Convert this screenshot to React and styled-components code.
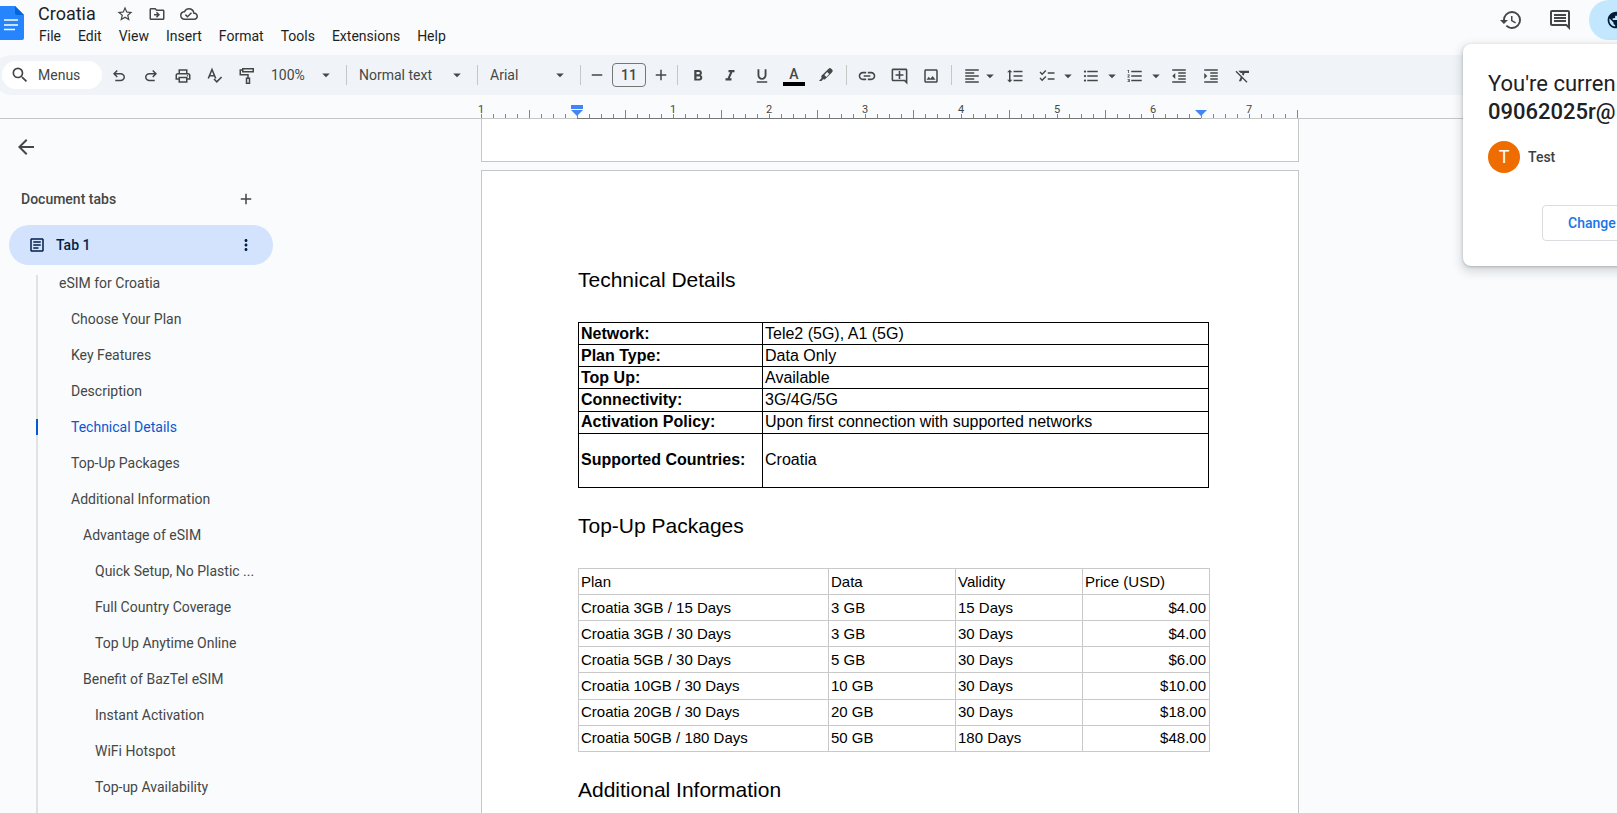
import { useState } from "react"
import styled, { createGlobalStyle } from "styled-components"
import {
    MdAdd, MdArrowBack, MdArrowDropDown, MdChecklist, MdFormatAlignLeft, MdFormatBold, MdFormatClear,
    MdFormatIndentDecrease, MdFormatIndentIncrease, MdFormatItalic, MdFormatLineSpacing, MdFormatListBulleted,
    MdFormatListNumbered, MdFormatUnderlined, MdHistory, MdInsertLink, MdMoreVert, MdOutlineAddComment,
    MdOutlineArticle, MdOutlineCloudDone, MdOutlineDriveFileMove, MdOutlineImage, MdOutlineInsertComment,
    MdOutlineLocalPrintshop, MdPublic, MdRemove, MdSearch, MdStarBorder
} from "react-icons/md"

const menus = ["File", "Edit", "View", "Insert", "Format", "Tools", "Extensions", "Help"]

const outline = [
    { text: "eSIM for Croatia", level: 0 },
    { text: "Choose Your Plan", level: 1 },
    { text: "Key Features", level: 1 },
    { text: "Description", level: 1 },
    { text: "Technical Details", level: 1 },
    { text: "Top-Up Packages", level: 1 },
    { text: "Additional Information", level: 1 },
    { text: "Advantage of eSIM", level: 2 },
    { text: "Quick Setup, No Plastic ...", level: 3 },
    { text: "Full Country Coverage", level: 3 },
    { text: "Top Up Anytime Online", level: 3 },
    { text: "Benefit of BazTel eSIM", level: 2 },
    { text: "Instant Activation", level: 3 },
    { text: "WiFi Hotspot", level: 3 },
    { text: "Top-up Availability", level: 3 }
]

const details = [
    ["Network:", "Tele2 (5G), A1 (5G)"],
    ["Plan Type:", "Data Only"],
    ["Top Up:", "Available"],
    ["Connectivity:", "3G/4G/5G"],
    ["Activation Policy:", "Upon first connection with supported networks"],
    ["Supported Countries:", "Croatia"]
]

const packages = [
    ["Croatia 3GB / 15 Days", "3 GB", "15 Days", "$4.00"],
    ["Croatia 3GB / 30 Days", "3 GB", "30 Days", "$4.00"],
    ["Croatia 5GB / 30 Days", "5 GB", "30 Days", "$6.00"],
    ["Croatia 10GB / 30 Days", "10 GB", "30 Days", "$10.00"],
    ["Croatia 20GB / 30 Days", "20 GB", "30 Days", "$18.00"],
    ["Croatia 50GB / 180 Days", "50 GB", "180 Days", "$48.00"]
]

// 12px per eighth of an inch, the text area runs from tick 8 to tick 60
const ticks = Array.from({ length: 69 }, (_, i) => i)

function tickLabel(i) {
    return i % 8 === 0 && i !== 8 ? Math.abs(i / 8 - 1) : null
}

function DocsLogo() {
    return (
        <svg width="24" height="34" viewBox="0 0 24 34">
            <path d="M0 0H15L24 9V32a2 2 0 0 1-2 2H0z" fill="#2684fc" />
            <path d="M15 0L24 9H17a2 2 0 0 1-2-2z" fill="#0066da" />
            <path d="M4 14h14M4 19h14M4 23.500h11" stroke="#fff" strokeWidth="1.600" />
        </svg>
    )
}

function UndoIcon() {
    return (
        <svg width="18" height="18" viewBox="0 -960 960 960" fill="currentColor">
            <path d="M280-200v-80h284q63 0 109.500-40T720-420q0-60-46.500-100T564-560H312l104 104-56 56-200-200 200-200 56 56-104 104h252q97 0 166.500 63T800-420q0 94-69.500 157T564-200H280Z" />
        </svg>
    )
}

function RedoIcon() {
    return (
        <svg width="18" height="18" viewBox="0 -960 960 960" fill="currentColor">
            <path d="M396-200q-97 0-166.500-63T160-420q0-94 69.500-157T396-640h252L544-744l56-56 200 200-200 200-56-56 104-104H396q-63 0-109.500 40T240-420q0 60 46.500 100T396-280h284v80H396Z" />
        </svg>
    )
}

function SpellIcon() {
    return (
        <svg width="18" height="18" viewBox="0 0 18 18" fill="none" stroke="currentColor" strokeWidth="1.600">
            <path d="M2.300 11.500L6 2.500L9.700 11.500M3.600 8.800h4.800" />
            <path d="M8 12l2.800 2.800 4.800-4.800" />
        </svg>
    )
}

function PaintIcon() {
    return (
        <svg width="18" height="18" viewBox="0 0 18 18" fill="none" stroke="currentColor" strokeWidth="1.500">
            <path d="M4.750 1.750h10.500v3H4.750zM4.500 3H2.250v4.750H10V11M8.500 11.250h3v5h-3z" />
        </svg>
    )
}

function HighlightIcon() {
    return (
        <svg width="18" height="18" viewBox="0 0 18 18" fill="currentColor">
            <path d="M2 14l2.600-3-.4-2L11.600 1.700c.8-.8 1.800-.8 2.600 0l.9.900c.8.800.8 1.800 0 2.600L7.800 12.500l-1.800-.300L4.500 14z" />
            <path d="M7.400 7.900l2 2L12.200 7l-2-2z" fill="#f0f4f9" />
        </svg>
    )
}

function DropDown({ label, value, width }) {
    return (
        <SelectBox $width={width}>
            <select aria-label={label} defaultValue={value}>
                <option>{value}</option>
            </select>
            <MdArrowDropDown size={18} />
        </SelectBox>
    )
}

function SplitTool({ label, narrow, children }) {
    return (
        <SplitButton aria-label={label} $narrow={narrow}>
            {children}
            <MdArrowDropDown size={18} />
        </SplitButton>
    )
}

export default function App() {
    const [active, setActive] = useState("Technical Details")
    const [title, setTitle] = useState("Croatia")
    const [size, setSize] = useState(11)

    return (
        <PageContainer>
            <GlobalStyle />

            <Header>
                <LogoLink href="#" aria-label="Docs home"><DocsLogo /></LogoLink>
                <TitleBlock>
                    <TitleRow>
                        <TitleInput aria-label="Rename" value={title} onChange={(e) => setTitle(e.target.value)} />
                        <TitleButton aria-label="Star"><MdStarBorder size={18} /></TitleButton>
                        <TitleButton aria-label="Move"><MdOutlineDriveFileMove size={18} /></TitleButton>
                        <TitleButton aria-label="Document status"><MdOutlineCloudDone size={18} /></TitleButton>
                    </TitleRow>
                    <MenuBar>
                        {menus.map((el) => <MenuItem key={el}>{el}</MenuItem>)}
                    </MenuBar>
                </TitleBlock>
                <HeaderActions>
                    <HeaderButton aria-label="Version history"><MdHistory size={24} /></HeaderButton>
                    <HeaderButton aria-label="Comments"><MdOutlineInsertComment size={24} /></HeaderButton>
                    <ShareButton aria-label="Share"><MdPublic size={20} /></ShareButton>
                </HeaderActions>
            </Header>

            <Toolbar>
                <SearchBox>
                    <MdSearch size={20} />
                    <input aria-label="Menus" placeholder="Menus" />
                </SearchBox>
                <ToolButton aria-label="Undo"><UndoIcon /></ToolButton>
                <ToolButton aria-label="Redo"><RedoIcon /></ToolButton>
                <ToolButton aria-label="Print"><MdOutlineLocalPrintshop size={18} /></ToolButton>
                <ToolButton aria-label="Spelling check"><SpellIcon /></ToolButton>
                <ToolButton aria-label="Paint format"><PaintIcon /></ToolButton>
                <DropDown label="Zoom" value="100%" width={79} />
                <Separator />
                <DropDown label="Styles" value="Normal text" width={122} />
                <Separator />
                <DropDown label="Font" value="Arial" width={94} />
                <Separator />
                <SizeGroup>
                    <SizeButton aria-label="Decrease font size" onClick={() => setSize(size - 1)}><MdRemove size={18} /></SizeButton>
                    <SizeInput aria-label="Font size" value={size} onChange={(e) => setSize(Number(e.target.value))} />
                    <SizeButton aria-label="Increase font size" onClick={() => setSize(size + 1)}><MdAdd size={18} /></SizeButton>
                </SizeGroup>
                <Separator />
                <ToolButton aria-label="Bold"><MdFormatBold size={18} /></ToolButton>
                <ToolButton aria-label="Italic"><MdFormatItalic size={18} /></ToolButton>
                <ToolButton aria-label="Underline"><MdFormatUnderlined size={18} /></ToolButton>
                <ToolButton aria-label="Text color"><ColorLetter>A</ColorLetter></ToolButton>
                <ToolButton aria-label="Highlight color"><HighlightIcon /></ToolButton>
                <Separator />
                <ToolButton aria-label="Insert link"><MdInsertLink size={20} /></ToolButton>
                <ToolButton aria-label="Add comment"><MdOutlineAddComment size={19} /></ToolButton>
                <ToolButton aria-label="Insert image"><MdOutlineImage size={18} /></ToolButton>
                <Separator />
                <SplitTool label="Align" narrow><MdFormatAlignLeft size={18} /></SplitTool>
                <ToolButton aria-label="Line spacing"><MdFormatLineSpacing size={18} /></ToolButton>
                <SplitTool label="Checklist"><MdChecklist size={18} /></SplitTool>
                <SplitTool label="Bulleted list"><MdFormatListBulleted size={18} /></SplitTool>
                <SplitTool label="Numbered list"><MdFormatListNumbered size={18} /></SplitTool>
                <ToolButton aria-label="Decrease indent"><MdFormatIndentDecrease size={18} /></ToolButton>
                <ToolButton aria-label="Increase indent"><MdFormatIndentIncrease size={18} /></ToolButton>
                <ToolButton aria-label="Clear formatting"><MdFormatClear size={18} /></ToolButton>
            </Toolbar>

            <Ruler>
                {ticks.map((i) =>
                <Tick key={i} $half={i % 8 === 4} $inside={i >= 8 && i < 60}>
                    {tickLabel(i) !== null && <TickLabel>{tickLabel(i)}</TickLabel>}
                    {i === 8 && <IndentMarker $first />}
                    {i === 60 && <IndentMarker />}
                </Tick>)}
            </Ruler>

            <Workspace>
                <Sidebar>
                    <BackButton aria-label="Close tabs"><MdArrowBack size={24} /></BackButton>
                    <SidebarTitle>
                        Document tabs
                        <SidebarButton aria-label="Add tab"><MdAdd size={18} /></SidebarButton>
                    </SidebarTitle>
                    <TabItem>
                        <MdOutlineArticle size={18} />
                        <span>Tab 1</span>
                        <SidebarButton aria-label="Tab options"><MdMoreVert size={18} /></SidebarButton>
                    </TabItem>
                    <OutlineList>
                        {outline.map((el) =>
                        <OutlineItem key={el.text} $level={el.level} $active={el.text === active}>
                            <a href="#" onClick={() => setActive(el.text)}>{el.text}</a>
                        </OutlineItem>)}
                    </OutlineList>
                </Sidebar>

                <Canvas>
                    <PreviousSheet />
                    <Sheet>
                        <Heading>Technical Details</Heading>
                        <DetailsTable>
                            <tbody>
                                {details.map((row) =>
                                <tr key={row[0]}>
                                    <th scope="row">{row[0]}</th>
                                    <td>{row[1]}</td>
                                </tr>)}
                            </tbody>
                        </DetailsTable>
                        <Heading>Top-Up Packages</Heading>
                        <PackagesTable>
                            <thead>
                                <tr>
                                    <th>Plan</th>
                                    <th>Data</th>
                                    <th>Validity</th>
                                    <th>Price (USD)</th>
                                </tr>
                            </thead>
                            <tbody>
                                {packages.map((row) =>
                                <tr key={row[0]}>
                                    {row.map((cell, i) => <td key={i}>{cell}</td>)}
                                </tr>)}
                            </tbody>
                        </PackagesTable>
                        <Heading>Additional Information</Heading>
                    </Sheet>
                </Canvas>
            </Workspace>

            <AccountPopup>
                <p>You're curren</p>
                <strong>09062025r@</strong>
                <AccountRow>
                    <Avatar>T</Avatar>
                    Test
                </AccountRow>
                <ChangeButton>Change</ChangeButton>
            </AccountPopup>
        </PageContainer>
    )
}

const GlobalStyle = createGlobalStyle`
    * {
        box-sizing: border-box;
    }
    body {
        margin: 0;
        overflow: hidden;
        background-color: #f9fbfd;
    }
    button, input, select {
        font-family: inherit;
        font-size: inherit;
        color: inherit;
        border: none;
        background: none;
        padding: 0;
        margin: 0;
    }
    button {
        cursor: pointer;
    }
    svg {
        flex-shrink: 0;
        display: block;
    }
`
const PageContainer = styled.div`
    position: relative;
    display: flex;
    flex-direction: column;
    height: 100vh;
    overflow: hidden;
    font-family: Roboto, "Liberation Sans", sans-serif;
    font-size: 14px;
    color: #444746;
`
const Header = styled.header`
    display: flex;
    align-items: flex-start;
    flex-shrink: 0;
    height: 55px;
`
const LogoLink = styled.a`
    padding-top: 6px;
`
const TitleBlock = styled.div`
    display: flex;
    flex-direction: column;
    padding-left: 6px;
`
const TitleRow = styled.div`
    display: flex;
    align-items: center;
    height: 26px;
    padding-left: 8px;
`
const TitleInput = styled.input`
    width: 71px;
    height: 24px;
    font-size: 18px;
    color: #1f1f1f;
`
const TitleButton = styled.button`
    display: flex;
    align-items: center;
    justify-content: center;
    width: 32px;
    height: 26px;
    padding-top: 2px;
`
const MenuBar = styled.nav`
    display: flex;
    gap: 1px;
    padding-left: 1px;
`
const MenuItem = styled.button`
    height: 20px;
    padding: 0 8px;
    color: #1f1f1f;
`
const HeaderActions = styled.div`
    display: flex;
    gap: 9px;
    margin-left: auto;
`
const HeaderButton = styled.button`
    display: flex;
    align-items: center;
    justify-content: center;
    width: 40px;
    height: 40px;
`
const ShareButton = styled.button`
    display: flex;
    align-items: center;
    width: 28px;
    height: 40px;
    padding-left: 17px;
    overflow: hidden;
    border-radius: 20px 0 0 20px;
    background-color: #c2e7ff;
    color: #001d35;
`
const Toolbar = styled.div`
    display: flex;
    align-items: center;
    flex-shrink: 0;
    height: 40px;
    margin-left: -8px;
    padding-left: 10px;
    border-radius: 20px 0 0 20px;
    background-color: #f0f4f9;
`
const SearchBox = styled.label`
    display: flex;
    align-items: center;
    gap: 8px;
    width: 100px;
    height: 28px;
    padding-left: 8px;
    margin-right: 1px;
    border-radius: 14px;
    background-color: #ffffff;
    input {
        width: 56px;
        &::placeholder {
            color: #444746;
            opacity: 1;
        }
    }
`
const ToolButton = styled.button`
    display: flex;
    align-items: center;
    justify-content: center;
    width: 32px;
    height: 28px;
    padding-top: 2px;
`
const SelectBox = styled.div`
    display: flex;
    align-items: center;
    position: relative;
    width: ${props => props.$width}px;
    height: 28px;
    font-weight: 500;
    select {
        appearance: none;
        width: 100%;
        height: 28px;
        padding-left: 8px;
    }
    svg {
        position: absolute;
        right: 7px;
        pointer-events: none;
    }
`
const Separator = styled.div`
    width: 1px;
    height: 20px;
    margin: 0 4px;
    background-color: #c7c7c7;
`
const SizeGroup = styled.div`
    display: flex;
    align-items: center;
    gap: 3px;
`
const SizeButton = styled.button`
    display: flex;
    align-items: center;
    justify-content: center;
    width: 24px;
    height: 24px;
`
const SizeInput = styled.input`
    width: 34px;
    height: 24px;
    border: 1px solid #747775;
    border-radius: 4px;
    text-align: center;
    font-weight: 500;
`
const ColorLetter = styled.span`
    width: 22px;
    height: 20px;
    border-bottom: 4px solid #000000;
    font-weight: 500;
    line-height: 16px;
`
const SplitButton = styled.button`
    display: flex;
    align-items: center;
    width: ${props => props.$narrow ? 43 : 44}px;
    height: 28px;
    padding: 2px 0 0 7px;
    gap: ${props => props.$narrow ? 0 : 3}px;
`
const Ruler = styled.div`
    display: flex;
    align-items: flex-end;
    flex-shrink: 0;
    height: 24px;
    padding-left: 481px;
    border-bottom: 1px solid #c4c7c5;
`
const Tick = styled.div`
    position: relative;
    flex-shrink: 0;
    width: 12px;
    height: ${props => props.$half ? 8 : 4}px;
    border-left: 1px solid #80868b;
    box-shadow: ${props => props.$inside ? "0 1px 0 #747775" : "none"};
`
const TickLabel = styled.span`
    position: absolute;
    bottom: 3px;
    left: -7px;
    width: 12px;
    font-size: 11px;
    line-height: 11px;
    text-align: center;
`
const IndentMarker = styled.span`
    position: absolute;
    left: -7px;
    bottom: 2px;
    border: 6px solid transparent;
    border-top-color: #4285f4;
    border-bottom: none;
    &::before {
        content: "";
        display: ${props => props.$first ? "block" : "none"};
        position: absolute;
        left: -6px;
        bottom: 7px;
        width: 12px;
        height: 4px;
        background-color: #4285f4;
    }
`
const Workspace = styled.div`
    display: flex;
    flex: 1;
    min-height: 0;
`
const Sidebar = styled.aside`
    display: flex;
    flex-direction: column;
    flex: 0 0 273px;
    padding: 16px 0 0 9px;
    overflow: hidden;
`
const BackButton = styled.button`
    display: flex;
    padding: 0 5px;
`
const SidebarTitle = styled.div`
    display: flex;
    align-items: center;
    justify-content: space-between;
    flex-shrink: 0;
    height: 40px;
    margin: 20px 0 6px;
    padding: 0 15px 0 12px;
    font-weight: 500;
`
const SidebarButton = styled.button`
    display: flex;
    align-items: center;
    justify-content: center;
    width: 24px;
    height: 24px;
`
const TabItem = styled.div`
    display: flex;
    align-items: center;
    flex-shrink: 0;
    height: 40px;
    padding: 0 15px 0 19px;
    border-radius: 20px;
    background-color: #d3e3fd;
    color: #041e49;
    font-weight: 500;
    span {
        flex: 1;
        padding-left: 10px;
    }
`
const OutlineList = styled.ul`
    flex: 1;
    list-style: none;
    margin: 10px 0 0 27px;
    padding: 0;
    border-left: 2px solid #e1e3e1;
`
const OutlineItem = styled.li`
    display: flex;
    align-items: center;
    height: 36px;
    margin-left: -2px;
    padding-left: ${props => 23 + props.$level * 12}px;
    background: ${props => props.$active ? "linear-gradient(#0b57d0, #0b57d0) 0 50% / 2px 16px no-repeat" : "none"};
    &:first-child {
        height: 26px;
        align-items: flex-start;
    }
    a {
        color: ${props => props.$active ? "#0b57d0" : "#444746"};
        text-decoration: none;
        white-space: nowrap;
    }
`
const Canvas = styled.main`
    flex: 1;
    padding-left: 208px;
    overflow: hidden;
`
const PreviousSheet = styled.div`
    width: 818px;
    height: 43px;
    margin-bottom: 8px;
    border: 1px solid #c4c7c5;
    border-top: none;
    background-color: #ffffff;
`
const Sheet = styled.article`
    width: 818px;
    min-height: 1056px;
    padding: 96px;
    border: 1px solid #c4c7c5;
    background-color: #ffffff;
    font-family: "Liberation Sans", Arial, sans-serif;
    color: #000000;
    table {
        border-collapse: collapse;
        table-layout: fixed;
    }
    th, td {
        padding: 0 2px;
        text-align: left;
    }
`
const Heading = styled.h2`
    margin: 0;
    padding-bottom: 29px;
    font-size: 21px;
    line-height: 26px;
    font-weight: 400;
`
const DetailsTable = styled.table`
    width: 631px;
    height: 166px;
    margin-bottom: 25px;
    font-size: 16px;
    line-height: 20px;
    th, td {
        height: 22px;
        border: 1px solid #000000;
    }
    th {
        width: 184px;
    }
    tr:last-child td {
        height: 54px;
    }
`
const PackagesTable = styled.table`
    width: 632px;
    height: 184px;
    margin-bottom: 25px;
    font-size: 15px;
    line-height: 20px;
    th, td {
        width: 127px;
        height: 26px;
        border: 1px solid #c9c9c9;
        font-weight: 400;
    }
    th:first-child {
        width: 250px;
    }
    td:last-child {
        padding-right: 3px;
        text-align: right;
    }
`
const AccountPopup = styled.section`
    position: absolute;
    top: 44px;
    right: -246px;
    width: 400px;
    height: 222px;
    padding: 26px 25px;
    border-radius: 8px;
    background-color: #ffffff;
    box-shadow: 0 4px 8px 3px rgba(60, 64, 67, 0.15), 0 1px 3px rgba(60, 64, 67, 0.3);
    font-size: 22px;
    line-height: 28px;
    color: #202124;
    p {
        margin: 0;
    }
    strong {
        font-weight: 500;
    }
`
const AccountRow = styled.div`
    display: flex;
    align-items: center;
    gap: 8px;
    margin: 15px 0 32px;
    font-size: 14px;
    font-weight: 500;
    color: #3c4043;
`
const Avatar = styled.span`
    display: flex;
    align-items: center;
    justify-content: center;
    width: 32px;
    height: 32px;
    border-radius: 50%;
    background-color: #ef6c00;
    color: #ffffff;
    font-size: 18px;
    font-weight: 400;
`
const ChangeButton = styled.button`
    height: 36px;
    margin-left: 54px;
    padding: 0 25px;
    border: 1px solid #dadce0;
    border-radius: 4px;
    color: #1a73e8;
    font-size: 14px;
    font-weight: 500;
`
